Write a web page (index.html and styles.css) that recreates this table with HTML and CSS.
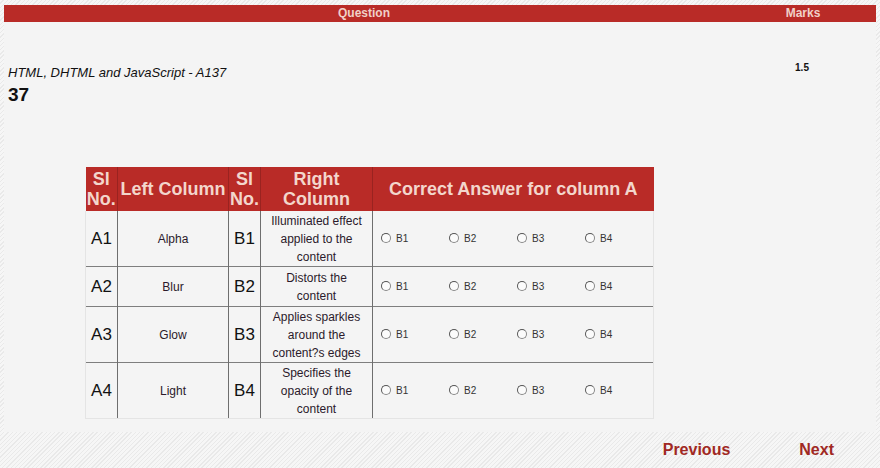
FILE: index.html
```html
<!DOCTYPE html>
<html>
<head>
<meta charset="utf-8">
<link rel="stylesheet" href="styles.css">
</head>
<body>
<div class="panel">
  <div class="bar">
    <div class="bar-q">Question</div>
    <div class="bar-m">Marks</div>
  </div>
  <div class="info">
    <div class="info-q">
      <div class="subject">HTML, DHTML and JavaScript - A137</div>
      <div class="qno">37</div>
    </div>
    <div class="info-m">1.5</div>
  </div>
  <table class="match">
    <colgroup>
      <col class="c1"><col class="c2"><col class="c3"><col class="c4"><col class="c5">
    </colgroup>
    <thead>
      <tr>
        <th class="sl">Sl<br>No.</th>
        <th>Left Column</th>
        <th class="sl">Sl<br>No.</th>
        <th>Right<br>Column</th>
        <th>Correct Answer for column A</th>
      </tr>
    </thead>
    <tbody>
      <tr class="tall">
        <td class="id">A1</td><td class="txt">Alpha</td><td class="id">B1</td>
        <td class="txt">Illuminated effect<br>applied to the<br>content</td>
        <td class="ans"><div class="opts"><label><span class="radio"></span>B1</label><label><span class="radio"></span>B2</label><label><span class="radio"></span>B3</label><label><span class="radio"></span>B4</label></div></td>
      </tr>
      <tr class="short">
        <td class="id">A2</td><td class="txt">Blur</td><td class="id">B2</td>
        <td class="txt">Distorts the<br>content</td>
        <td class="ans"><div class="opts"><label><span class="radio"></span>B1</label><label><span class="radio"></span>B2</label><label><span class="radio"></span>B3</label><label><span class="radio"></span>B4</label></div></td>
      </tr>
      <tr class="tall">
        <td class="id">A3</td><td class="txt">Glow</td><td class="id">B3</td>
        <td class="txt">Applies sparkles<br>around the<br>content?s edges</td>
        <td class="ans"><div class="opts"><label><span class="radio"></span>B1</label><label><span class="radio"></span>B2</label><label><span class="radio"></span>B3</label><label><span class="radio"></span>B4</label></div></td>
      </tr>
      <tr class="tall last">
        <td class="id">A4</td><td class="txt">Light</td><td class="id">B4</td>
        <td class="txt">Specifies the<br>opacity of the<br>content</td>
        <td class="ans"><div class="opts"><label><span class="radio"></span>B1</label><label><span class="radio"></span>B2</label><label><span class="radio"></span>B3</label><label><span class="radio"></span>B4</label></div></td>
      </tr>
    </tbody>
  </table>
</div>
<div class="nav">
  <a class="prev">Previous</a>
  <a class="next">Next</a>
</div>
</body>
</html>
```

FILE: styles.css
```css
html, body {
  margin: 0;
  padding: 0;
}
body {
  width: 880px;
  height: 468px;
  overflow: hidden;
  font-family: "Liberation Sans", Arial, sans-serif;
  background-color: #f3f3f3;
  background-image: repeating-linear-gradient(135deg, #f6f6f6 0px, #f6f6f6 2px, #e9e9e9 2px, #e9e9e9 3px);
}
.panel {
  margin: 5px 4px 0 4px;
  height: 427px;
  background: #f4f4f4;
  display: flex;
  flex-direction: column;
}
.bar {
  height: 17px;
  background: #b92b27;
  display: flex;
  color: #f0d0c8;
  font-weight: bold;
  font-size: 12px;
  line-height: 17px;
}
.bar-q {
  width: 720px;
  text-align: center;
}
.bar-m {
  flex: 1;
  text-align: center;
  padding-left: 6px;
}
.info {
  display: flex;
  padding-top: 39px;
}
.info-q {
  width: 720px;
  padding-left: 4px;
}
.info-m {
  flex: 1;
  text-align: center;
  font-size: 10px;
  font-weight: bold;
  color: #111;
  padding-top: 1px;
}
.subject {
  font-style: italic;
  font-size: 13px;
  color: #111;
  line-height: 16px;
  padding-top: 4px;
}
.qno {
  font-size: 19px;
  font-weight: bold;
  color: #111;
  line-height: 22px;
  margin-top: 3px;
}
.match {
  margin: 61px 0 0 81px;
  border-collapse: collapse;
  width: 568px;
  table-layout: fixed;
  background: #f4f4f4;
}
.c1, .c3 { width: 32px; }
.c2 { width: 111px; }
.c4 { width: 112px; }
.c5 { width: 281px; }
.match th {
  background: #b92b27;
  color: #f3d6cc;
  font-size: 18px;
  font-weight: bold;
  line-height: 20px;
  height: 44px;
  padding: 0;
  border-left: 1px solid #9a2320;
  white-space: nowrap;
}
.match th:first-child { border-left: none; }
.match td {
  border-left: 1px solid #6e6e6e;
  border-top: 1px solid #7e7e7e;
  padding: 0;
  text-align: center;
  vertical-align: middle;
  color: #2b1a2b;
}
.match td:first-child { border-left: 1px solid #e4e4e4; }
.match td:last-child { border-right: 1px solid #e4e4e4; }
.match tr.last td { border-bottom: 1px solid #e4e4e4; }
.match tbody tr:first-child td { border-top: none; }
.tall td { height: 55px; }
.short td { height: 39px; }
.id {
  font-size: 17px;
  color: #111 !important;
}
.txt {
  font-size: 12px;
  line-height: 18px;
}
.ans {
  text-align: left !important;
}
.opts {
  display: flex;
  padding-left: 8px;
}
.opts label {
  width: 69.5px;
  font-size: 10px;
  color: #333;
  display: flex;
  align-items: center;
}
.radio {
  width: 8px;
  height: 8px;
  border-radius: 50%;
  border: 1px solid #888;
  border-top-color: #555;
  border-left-color: #555;
  background: #fbfbfb;
  margin-right: 5px;
  margin-top: -2px;
}
.nav {
  display: flex;
  justify-content: flex-end;
  padding-top: 9px;
}
.nav a {
  color: #a02823;
  font-weight: bold;
  font-size: 16px;
  line-height: 18px;
}
.prev { margin-right: 69px; }
.next { margin-right: 46px; }
```
